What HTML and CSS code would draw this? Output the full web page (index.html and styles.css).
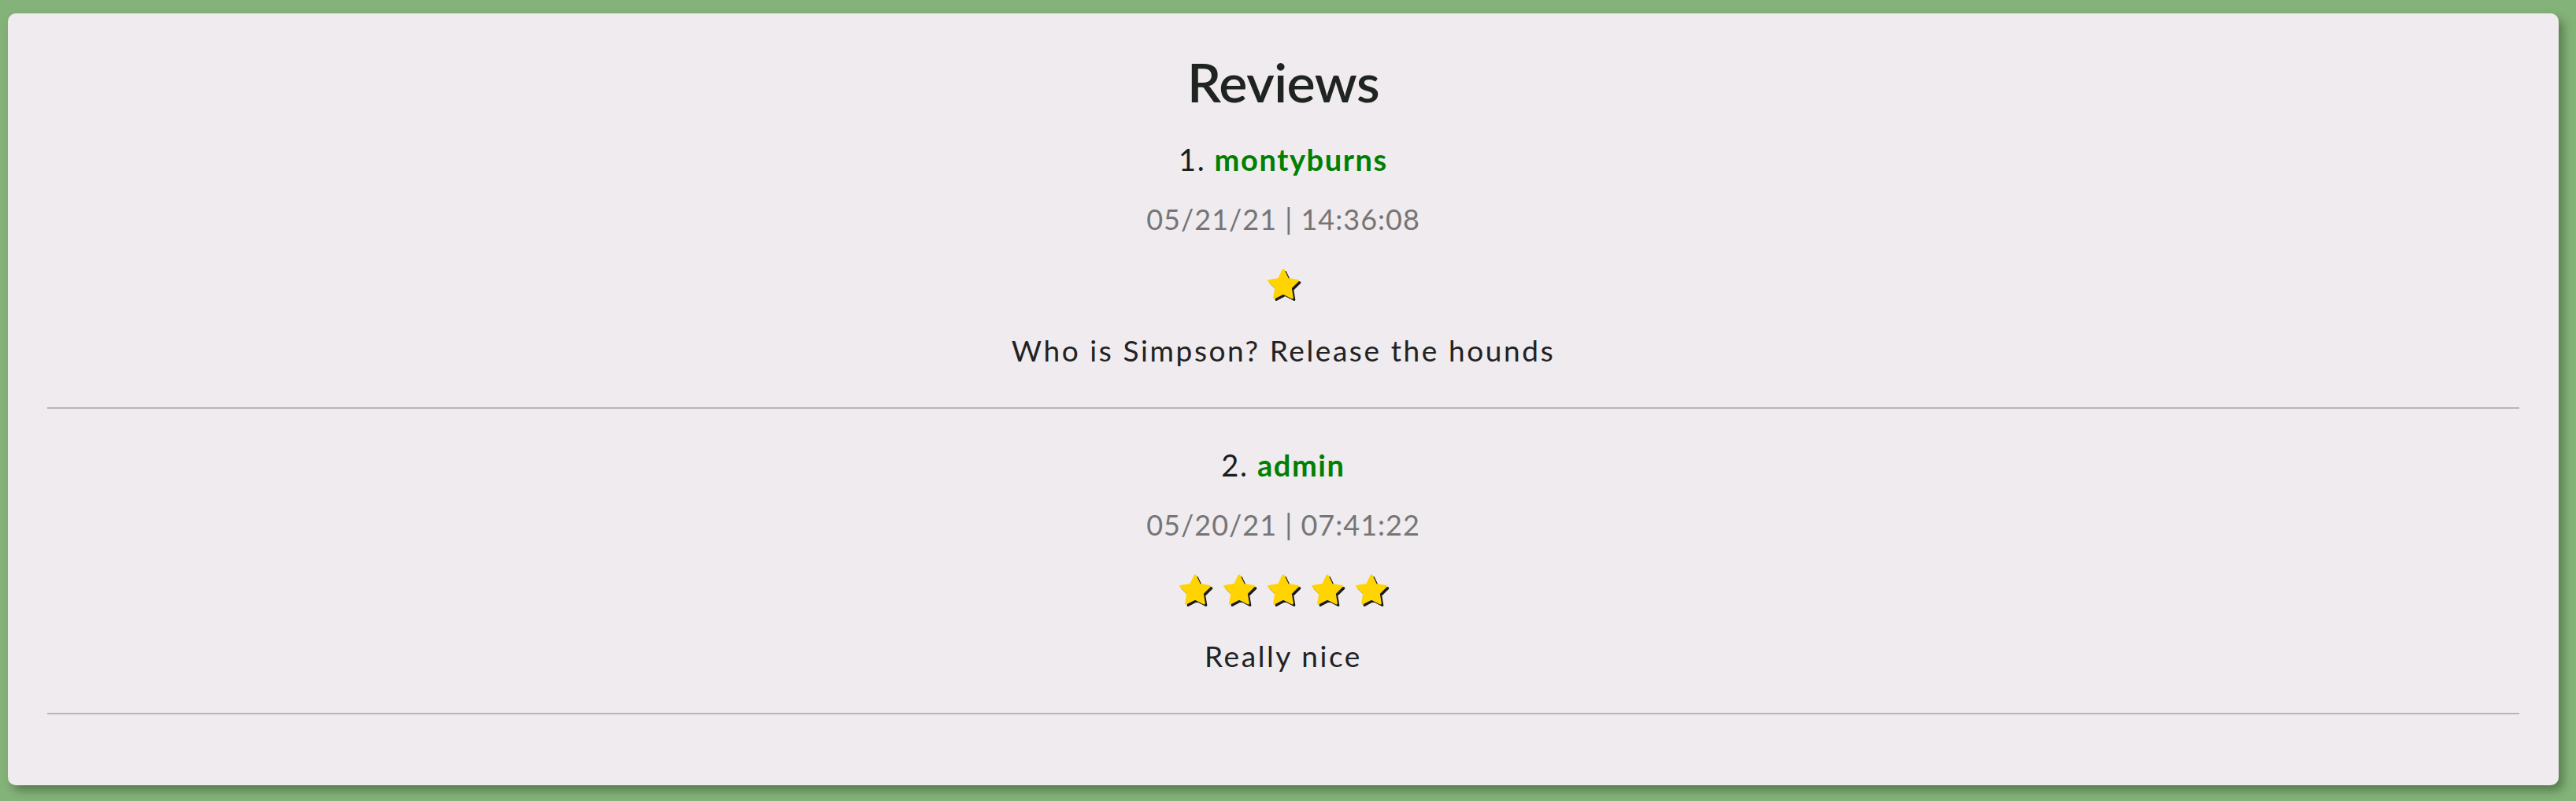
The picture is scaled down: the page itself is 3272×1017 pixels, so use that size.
FILE: index.html
```html
<!DOCTYPE html>
<html lang="en">
<head>
<meta charset="utf-8">
<title>Reviews</title>
<link rel="stylesheet" href="styles.css">
</head>
<body>
<svg width="0" height="0" class="defs" aria-hidden="true">
  <defs>
    <path id="star" d="M12 2.6l2.95 6.05 6.6.95-4.78 4.67 1.13 6.58L12 17.75l-5.9 3.1 1.13-6.58L2.45 9.6l6.6-.95z"/>
  </defs>
</svg>
<main class="card">
  <h1 class="title">Reviews</h1>
  <section class="review">
    <p class="name"><span class="num">1.</span> <span class="user">montyburns</span></p>
    <p class="date">05/21/21 | 14:36:08</p>
    <div class="stars">
      <svg class="star" viewBox="0 0 24 24"><use href="#star" class="shadow" transform="translate(1.3 1.3)"/><use href="#star" class="fill"/></svg>
    </div>
    <p class="text">Who is Simpson? Release the hounds</p>
  </section>
  <hr class="sep">
  <section class="review">
    <p class="name"><span class="num">2.</span> <span class="user">admin</span></p>
    <p class="date">05/20/21 | 07:41:22</p>
    <div class="stars">
      <svg class="star" viewBox="0 0 24 24"><use href="#star" class="shadow" transform="translate(1.3 1.3)"/><use href="#star" class="fill"/></svg>
      <svg class="star" viewBox="0 0 24 24"><use href="#star" class="shadow" transform="translate(1.3 1.3)"/><use href="#star" class="fill"/></svg>
      <svg class="star" viewBox="0 0 24 24"><use href="#star" class="shadow" transform="translate(1.3 1.3)"/><use href="#star" class="fill"/></svg>
      <svg class="star" viewBox="0 0 24 24"><use href="#star" class="shadow" transform="translate(1.3 1.3)"/><use href="#star" class="fill"/></svg>
      <svg class="star" viewBox="0 0 24 24"><use href="#star" class="shadow" transform="translate(1.3 1.3)"/><use href="#star" class="fill"/></svg>
    </div>
    <p class="text">Really nice</p>
  </section>
  <hr class="sep">
</main>
</body>
</html>
```
FILE: styles.css
```css
html, body {
  margin: 0;
  padding: 0;
}
body {
  background: #84b379;
  padding: 17px 22px 20px 10px;
  font-family: Lato, "Open Sans", sans-serif;
  color: #222;
}
.defs {
  position: absolute;
}
.card {
  background: #efebee;
  border-radius: 10px;
  box-shadow: 6px 7px 12px rgba(30, 60, 25, 0.45);
  padding: 47px 50px 88px;
  min-height: 980px;
  box-sizing: border-box;
  text-align: center;
}
.title {
  margin: 0;
  font-family: Lato, sans-serif;
  font-weight: 600;
  font-size: 68px;
  line-height: 80px;
  letter-spacing: -0.5px;
  color: #1f2420;
}
.review {
  display: flex;
  flex-direction: column;
  align-items: center;
}
.review p {
  margin: 0;
}
.title + .review {
  margin-top: 33px;
}
.sep + .review {
  margin-top: 46px;
}
.name {
  font-size: 38px;
  line-height: 50px;
  letter-spacing: 1.6px;
}
.num {
  font-weight: 400;
  color: #1c1c1c;
}
.user {
  font-weight: 700;
  color: #008000;
}
.date {
  margin-top: 26px !important;
  font-size: 36px;
  line-height: 50px;
  font-weight: 400;
  letter-spacing: 1px;
  color: #757575;
}
.stars {
  margin-top: 37px;
  display: flex;
  gap: 10px;
  height: 44px;
}
.star {
  width: 46px;
  height: 46px;
  margin-top: -2px;
  overflow: visible;
}
.star .shadow {
  fill: #1b1b1b;
  stroke: #1b1b1b;
  stroke-width: 1.6;
  stroke-linejoin: round;
}
.star .fill {
  fill: #ffd400;
  stroke: #ffd400;
  stroke-width: 1.6;
  stroke-linejoin: round;
}
.text {
  margin-top: 36px !important;
  font-size: 37px;
  line-height: 50px;
  letter-spacing: 2.6px;
  color: #222;
}
.sep {
  margin: 47px 0 0;
  border: 0;
  height: 2px;
  background: #bab5ba;
}
```
